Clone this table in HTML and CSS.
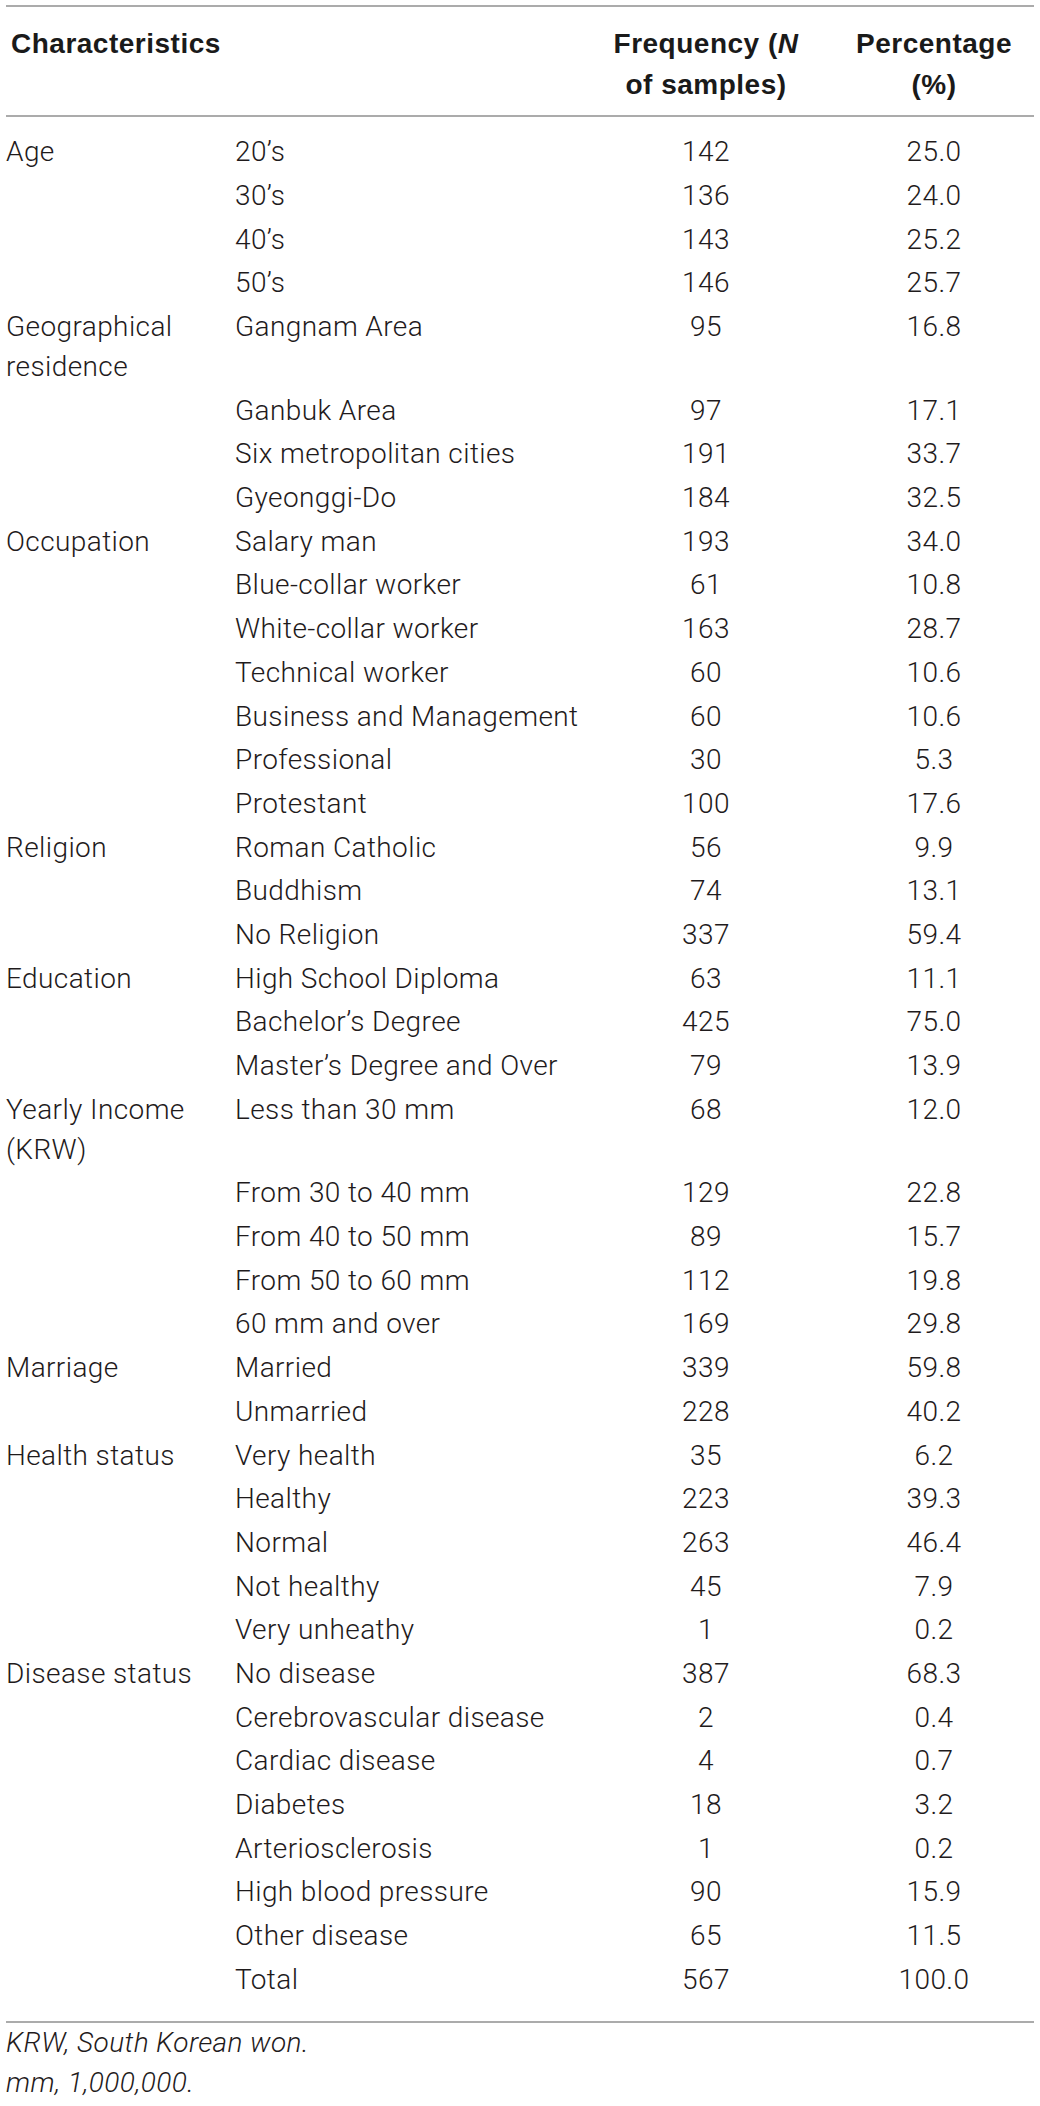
FILE: index.html
```html
<!DOCTYPE html>
<html lang="en">
<head>
<meta charset="utf-8">
<title>Sample characteristics</title>
<link rel="stylesheet" href="styles.css">
</head>
<body>
<div class="page">
<table class="data">
  <colgroup>
    <col class="c1"><col class="c2"><col class="c3"><col class="c4">
  </colgroup>
  <thead>
    <tr>
      <th class="left" colspan="2">Characteristics</th>
      <th class="num">Frequency (<i>N</i><br>of samples)</th>
      <th class="num">Percentage<br>(%)</th>
    </tr>
  </thead>
  <tbody>
    <tr><td>Age</td><td>20’s</td><td class="num">142</td><td class="num">25.0</td></tr>
    <tr><td></td><td>30’s</td><td class="num">136</td><td class="num">24.0</td></tr>
    <tr><td></td><td>40’s</td><td class="num">143</td><td class="num">25.2</td></tr>
    <tr><td></td><td>50’s</td><td class="num">146</td><td class="num">25.7</td></tr>
    <tr><td>Geographical<br>residence</td><td>Gangnam Area</td><td class="num">95</td><td class="num">16.8</td></tr>
    <tr><td></td><td>Ganbuk Area</td><td class="num">97</td><td class="num">17.1</td></tr>
    <tr><td></td><td>Six metropolitan cities</td><td class="num">191</td><td class="num">33.7</td></tr>
    <tr><td></td><td>Gyeonggi-Do</td><td class="num">184</td><td class="num">32.5</td></tr>
    <tr><td>Occupation</td><td>Salary man</td><td class="num">193</td><td class="num">34.0</td></tr>
    <tr><td></td><td>Blue-collar worker</td><td class="num">61</td><td class="num">10.8</td></tr>
    <tr><td></td><td>White-collar worker</td><td class="num">163</td><td class="num">28.7</td></tr>
    <tr><td></td><td>Technical worker</td><td class="num">60</td><td class="num">10.6</td></tr>
    <tr><td></td><td>Business and Management</td><td class="num">60</td><td class="num">10.6</td></tr>
    <tr><td></td><td>Professional</td><td class="num">30</td><td class="num">5.3</td></tr>
    <tr><td></td><td>Protestant</td><td class="num">100</td><td class="num">17.6</td></tr>
    <tr><td>Religion</td><td>Roman Catholic</td><td class="num">56</td><td class="num">9.9</td></tr>
    <tr><td></td><td>Buddhism</td><td class="num">74</td><td class="num">13.1</td></tr>
    <tr><td></td><td>No Religion</td><td class="num">337</td><td class="num">59.4</td></tr>
    <tr><td>Education</td><td>High School Diploma</td><td class="num">63</td><td class="num">11.1</td></tr>
    <tr><td></td><td>Bachelor’s Degree</td><td class="num">425</td><td class="num">75.0</td></tr>
    <tr><td></td><td>Master’s Degree and Over</td><td class="num">79</td><td class="num">13.9</td></tr>
    <tr><td>Yearly Income<br>(KRW)</td><td>Less than 30 mm</td><td class="num">68</td><td class="num">12.0</td></tr>
    <tr><td></td><td>From 30 to 40 mm</td><td class="num">129</td><td class="num">22.8</td></tr>
    <tr><td></td><td>From 40 to 50 mm</td><td class="num">89</td><td class="num">15.7</td></tr>
    <tr><td></td><td>From 50 to 60 mm</td><td class="num">112</td><td class="num">19.8</td></tr>
    <tr><td></td><td>60 mm and over</td><td class="num">169</td><td class="num">29.8</td></tr>
    <tr><td>Marriage</td><td>Married</td><td class="num">339</td><td class="num">59.8</td></tr>
    <tr><td></td><td>Unmarried</td><td class="num">228</td><td class="num">40.2</td></tr>
    <tr><td>Health status</td><td>Very health</td><td class="num">35</td><td class="num">6.2</td></tr>
    <tr><td></td><td>Healthy</td><td class="num">223</td><td class="num">39.3</td></tr>
    <tr><td></td><td>Normal</td><td class="num">263</td><td class="num">46.4</td></tr>
    <tr><td></td><td>Not healthy</td><td class="num">45</td><td class="num">7.9</td></tr>
    <tr><td></td><td>Very unheathy</td><td class="num">1</td><td class="num">0.2</td></tr>
    <tr><td>Disease status</td><td>No disease</td><td class="num">387</td><td class="num">68.3</td></tr>
    <tr><td></td><td>Cerebrovascular disease</td><td class="num">2</td><td class="num">0.4</td></tr>
    <tr><td></td><td>Cardiac disease</td><td class="num">4</td><td class="num">0.7</td></tr>
    <tr><td></td><td>Diabetes</td><td class="num">18</td><td class="num">3.2</td></tr>
    <tr><td></td><td>Arteriosclerosis</td><td class="num">1</td><td class="num">0.2</td></tr>
    <tr><td></td><td>High blood pressure</td><td class="num">90</td><td class="num">15.9</td></tr>
    <tr><td></td><td>Other disease</td><td class="num">65</td><td class="num">11.5</td></tr>
    <tr><td></td><td>Total</td><td class="num">567</td><td class="num">100.0</td></tr>
  </tbody>
</table>
<div class="notes">
  <p>KRW, South Korean won.</p>
  <p>mm, 1,000,000.</p>
</div>
</div>
</body>
</html>
```

FILE: styles.css
```css
html, body {
  margin: 0;
  padding: 0;
  background: #ffffff;
}

.page {
  padding: 5px 6px 0 6px;
  font-family: Roboto, "Liberation Sans", Arial, sans-serif;
  font-weight: 300;
  letter-spacing: 0.4px;
  font-size: 28px;
  color: #1f1b1c;
}

.data {
  width: 1028px;
  border-collapse: collapse;
  table-layout: fixed;
  border-top: 2px solid #ababab;
}

.c1 { width: 229px; }
.c2 { width: 343px; }
.c3 { width: 256px; }
.c4 { width: 200px; }

.data th {
  font-family: "Liberation Sans", Arial, sans-serif;
  font-weight: bold;
  letter-spacing: 0.5px;
  line-height: 41px;
  padding: 15.5px 0 10.5px 0;
  vertical-align: top;
  border-bottom: 2px solid #ababab;
  color: #1a1a1a;
}

.data th.left {
  text-align: left;
  padding-left: 5px;
}

.data td {
  line-height: 40px;
  padding: 1.85px 0;
  vertical-align: top;
  text-align: left;
  white-space: nowrap;
}

.data .num {
  text-align: center;
}

.data tbody tr:first-child td {
  padding-top: 15.3px;
}

.data tbody tr:last-child td {
  padding-bottom: 21px;
  border-bottom: 2px solid #ababab;
}

.notes {
  font-style: italic;
  line-height: 40px;
}

.notes p {
  margin: 0;
}
```
